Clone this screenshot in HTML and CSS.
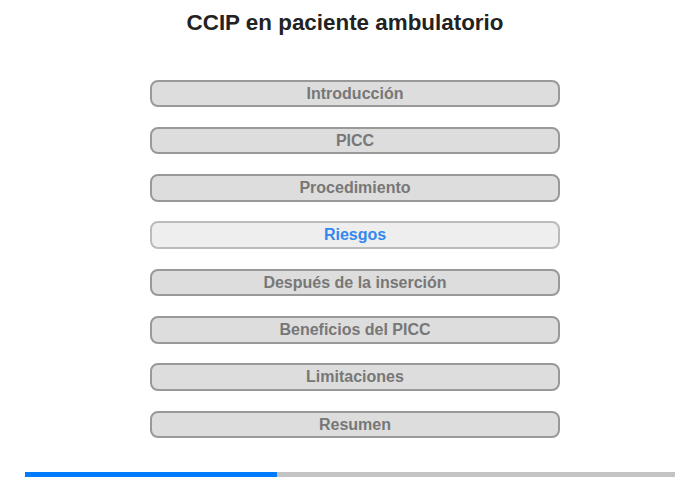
FILE: index.html
```html
<!DOCTYPE html>
<html lang="es">
<head>
  <meta charset="UTF-8">
  <meta name="viewport" content="width=device-width, initial-scale=1.0">
  <title>CCIP en paciente ambulatorio</title>
  <link rel="stylesheet" href="styles.css">
</head>
<body>
  <div class="page">
    <h1 class="title">CCIP en paciente ambulatorio</h1>
    <ul class="menu">
      <li>Introducción</li>
      <li>PICC</li>
      <li>Procedimiento</li>
      <li class="active">Riesgos</li>
      <li>Después de la inserción</li>
      <li>Beneficios del PICC</li>
      <li>Limitaciones</li>
      <li>Resumen</li>
    </ul>
    <div class="progress">
      <div class="bar" style="width:38.8%"></div>
    </div>
  </div>
</body>
</html>
```

FILE: styles.css
```css
*{margin:0;padding:0;box-sizing:border-box;}
body{font-family:"Liberation Sans",Arial,sans-serif;background:#fff;}
.page{width:700px;height:480px;display:flex;flex-direction:column;}
.title{
  font-size:22.4px;
  font-weight:bold;
  color:#222;
  text-align:center;
  margin-top:10px;
  margin-left:-10px;
  line-height:25px;
}
.menu{
  list-style:none;
  display:flex;
  flex-direction:column;
  gap:19.67px;
  width:410px;
  margin:44.5px 0 0 150px;
}
.menu li{
  height:27.67px;
  line-height:23.67px;
  border:2px solid #999;
  border-radius:8px;
  background:#ddd;
  color:#777;
  font-size:16px;
  font-weight:bold;
  text-align:center;
}
.menu li.active{
  background:#eee;
  border-color:#bbb;
  color:#3388ee;
}
.progress{
  margin:34px 0 0 25px;
  width:650px;
  height:5px;
  background:#c3c3c3;
}
.progress .bar{height:100%;background:#007bff;}
```
